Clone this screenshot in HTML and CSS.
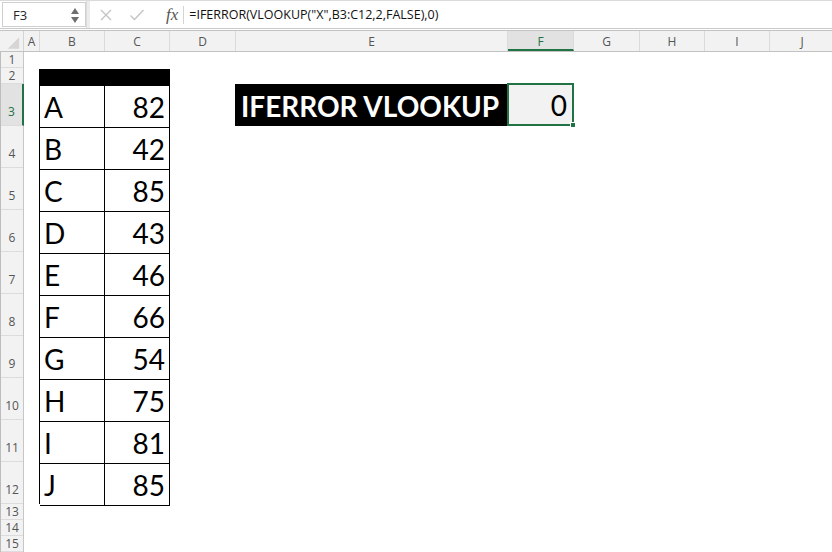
FILE: index.html
```html
<!DOCTYPE html>
<html>
<head>
<meta charset="utf-8">
<link rel="stylesheet" href="styles.css">
</head>
<body>
<div class="app">
  <div class="fbar">
    <div class="namebox">
      <span class="nb-text">F3</span>
      <svg class="spin" width="8" height="18" viewBox="0 0 8 18"><polygon points="4,2 8,8 0,8" fill="#6f6f6f"/><polygon points="0,11 8,11 4,17" fill="#6f6f6f"/></svg>
    </div>
    <div class="fsplit"></div>
    <div class="fbtns">
      <svg class="ico" width="14" height="14" viewBox="0 0 14 14"><path d="M2 2 L12 12 M12 2 L2 12" stroke="#c4c4c4" stroke-width="1.4" fill="none"/></svg>
      <svg class="ico" width="16" height="14" viewBox="0 0 16 14"><path d="M1.5 7.5 L5.5 11.5 L14.5 2" stroke="#c4c4c4" stroke-width="1.4" fill="none"/></svg>
      <span class="fx">fx</span>
    </div>
    <div class="fsep"></div>
    <div class="formula">=IFERROR(VLOOKUP("X",B3:C12,2,FALSE),0)</div>
  </div>
  <div class="sheet">
    <div class="colheads">
      <div class="corner"><svg width="24" height="22" viewBox="0 0 24 22"><polygon points="20,6 20,18 8,18" fill="#d6d6d6"/></svg></div>
      <div class="ch w16">A</div>
      <div class="ch w65">B</div>
      <div class="ch w65">C</div>
      <div class="ch w66">D</div>
      <div class="ch w272">E</div>
      <div class="ch w66 sel">F</div>
      <div class="ch w66">G</div>
      <div class="ch w65">H</div>
      <div class="ch w65">I</div>
      <div class="ch w65">J</div>
    </div>
    <div class="body">
      <div class="rowheads">
        <div class="rh sm">1</div>
        <div class="rh sm">2</div>
        <div class="rh lg sel">3</div>
        <div class="rh lg">4</div>
        <div class="rh lg">5</div>
        <div class="rh lg">6</div>
        <div class="rh lg">7</div>
        <div class="rh lg">8</div>
        <div class="rh lg">9</div>
        <div class="rh lg">10</div>
        <div class="rh lg">11</div>
        <div class="rh lg">12</div>
        <div class="rh sm">13</div>
        <div class="rh sm">14</div>
        <div class="rh sm">15</div>
      </div>
      <div class="cells">
        <div class="data">
          <div class="dhead"></div>
          <div class="dc l">A</div><div class="dc r">82</div>
          <div class="dc l">B</div><div class="dc r">42</div>
          <div class="dc l">C</div><div class="dc r">85</div>
          <div class="dc l">D</div><div class="dc r">43</div>
          <div class="dc l">E</div><div class="dc r">46</div>
          <div class="dc l">F</div><div class="dc r">66</div>
          <div class="dc l">G</div><div class="dc r">54</div>
          <div class="dc l">H</div><div class="dc r">75</div>
          <div class="dc l">I</div><div class="dc r">81</div>
          <div class="dc l">J</div><div class="dc r">85</div>
        </div>
        <div class="label">IFERROR VLOOKUP</div>
        <div class="value">0<span class="handle"></span></div>
      </div>
    </div>
  </div>
</div>
</body>
</html>
```

FILE: styles.css
```css
* { box-sizing: border-box; }
html, body { margin: 0; padding: 0; }
body {
  width: 832px;
  height: 552px;
  overflow: hidden;
  background: #ffffff;
  font-family: "Open Sans", "Liberation Sans", sans-serif;
}
.app { width: 832px; height: 552px; overflow: hidden; }

/* formula bar */
.fbar {
  height: 29px;
  display: flex;
  align-items: center;
  border-top: 1px solid #dadada;
  border-bottom: 1px solid #c9c9c9;
  background: #ffffff;
}
.namebox {
  margin-left: 2px;
  width: 84px;
  height: 25px;
  border: 1px solid #cfcfcf;
  display: flex;
  align-items: center;
  justify-content: space-between;
  padding: 0 6px 0 10px;
  font-size: 13px;
  color: #262626;
}
.fsplit {
  width: 4px;
  height: 27px;
  background: #ececec;
  border-left: 1px solid #dcdcdc;
}
.fbtns {
  display: flex;
  align-items: center;
  padding-left: 9px;
  gap: 16px;
}
.fx {
  font-family: "Liberation Serif", "DejaVu Serif", serif;
  font-style: italic;
  font-size: 17px;
  color: #555555;
  margin-left: 5px;
  line-height: 1;
}
.fsep {
  width: 1px;
  height: 18px;
  background: #d4d4d4;
  margin-left: 5px;
}
.formula {
  margin-left: 5px;
  font-size: 12.5px;
  color: #111111;
  white-space: nowrap;
}

/* sheet */
.sheet { margin-top: 1px; }
.colheads {
  display: flex;
  height: 22px;
  border-top: 1px solid #c3c3c3;
  border-bottom: 1px solid #c2c2c2;
  background: #f2f2f2;
}
.corner {
  width: 24px;
  flex: none;
  border-right: 1px solid #d4d4d4;
  display: flex;
}
.ch {
  flex: none;
  display: flex;
  align-items: center;
  justify-content: center;
  font-size: 12px;
  color: #555555;
  border-right: 1px solid #dadada;
}
.w16 { width: 16px; }
.w65 { width: 65px; }
.w66 { width: 66px; }
.w272 { width: 272px; }
.ch.sel {
  background: #e2e2e2;
  color: #217346;
  border-bottom: 2px solid #217346;
  padding-top: 2px;
}

.body { display: flex; }
.rowheads {
  width: 24px;
  flex: none;
  display: flex;
  flex-direction: column;
  background: #f2f2f2;
  border-right: 1px solid #c6c6c6;
  border-left: 1px solid #bdbdbd;
}
.rh {
  font-size: 12px;
  color: #555555;
  display: flex;
  justify-content: center;
  align-items: flex-end;
  border-bottom: 1px solid #dcdcdc;
  line-height: 15px;
}
.rh.sm { height: 16px; }
.rh.lg { height: 42px; padding-bottom: 6px; }
.rh.sel {
  background: #e2e2e2;
  color: #217346;
  border-right: 2px solid #217346;
  margin-right: -1px;
}

.cells {
  display: grid;
  grid-template-columns: 16px 65px 65px 66px 272px 66px 66px 65px 65px 65px;
  grid-template-rows: 16px 16px repeat(10, 42px) 16px 16px 16px;
}

.data {
  grid-column: 2 / 4;
  grid-row: 2 / 13;
  display: grid;
  grid-template-columns: 65px 65px;
  grid-template-rows: 17px repeat(10, 42px);
  margin-top: 1px;
  margin-left: -1px;
  border-left: 1px solid #000000;
}
.dhead {
  grid-column: 1 / 3;
  background: #000000;
}
.dc {
  border-right: 1px solid #000000;
  border-bottom: 1px solid #000000;
  font-family: Lato, "Open Sans", sans-serif;
  font-size: 28px;
  color: #000000;
  display: flex;
  align-items: flex-end;
  line-height: 34px;
  padding-bottom: 3px;
}
.dc.l { padding-left: 4px; }
.dc.r { justify-content: flex-end; padding-right: 4px; }

.label {
  grid-column: 5;
  grid-row: 3;
  margin-left: -1px;
  margin-right: 1px;
  background: #000000;
  color: #ffffff;
  font-family: Lato, "Open Sans", sans-serif;
  font-weight: 700;
  font-size: 28px;
  display: flex;
  align-items: flex-end;
  padding-left: 6px;
  line-height: 34px;
  padding-bottom: 3px;
  white-space: nowrap;
}
.value {
  grid-column: 6;
  grid-row: 3;
  margin-left: -1px;
  margin-top: -1px;
  position: relative;
  background: #f2f2f2;
  border: 2px solid #217346;
  font-family: Lato, "Open Sans", sans-serif;
  font-size: 28px;
  color: #000000;
  display: flex;
  align-items: flex-end;
  justify-content: flex-end;
  padding-right: 5px;
  line-height: 34px;
  padding-bottom: 2px;
}
.handle {
  position: absolute;
  right: -4px;
  bottom: -4px;
  width: 6px;
  height: 6px;
  background: #217346;
  border: 1px solid #ffffff;
}
```
